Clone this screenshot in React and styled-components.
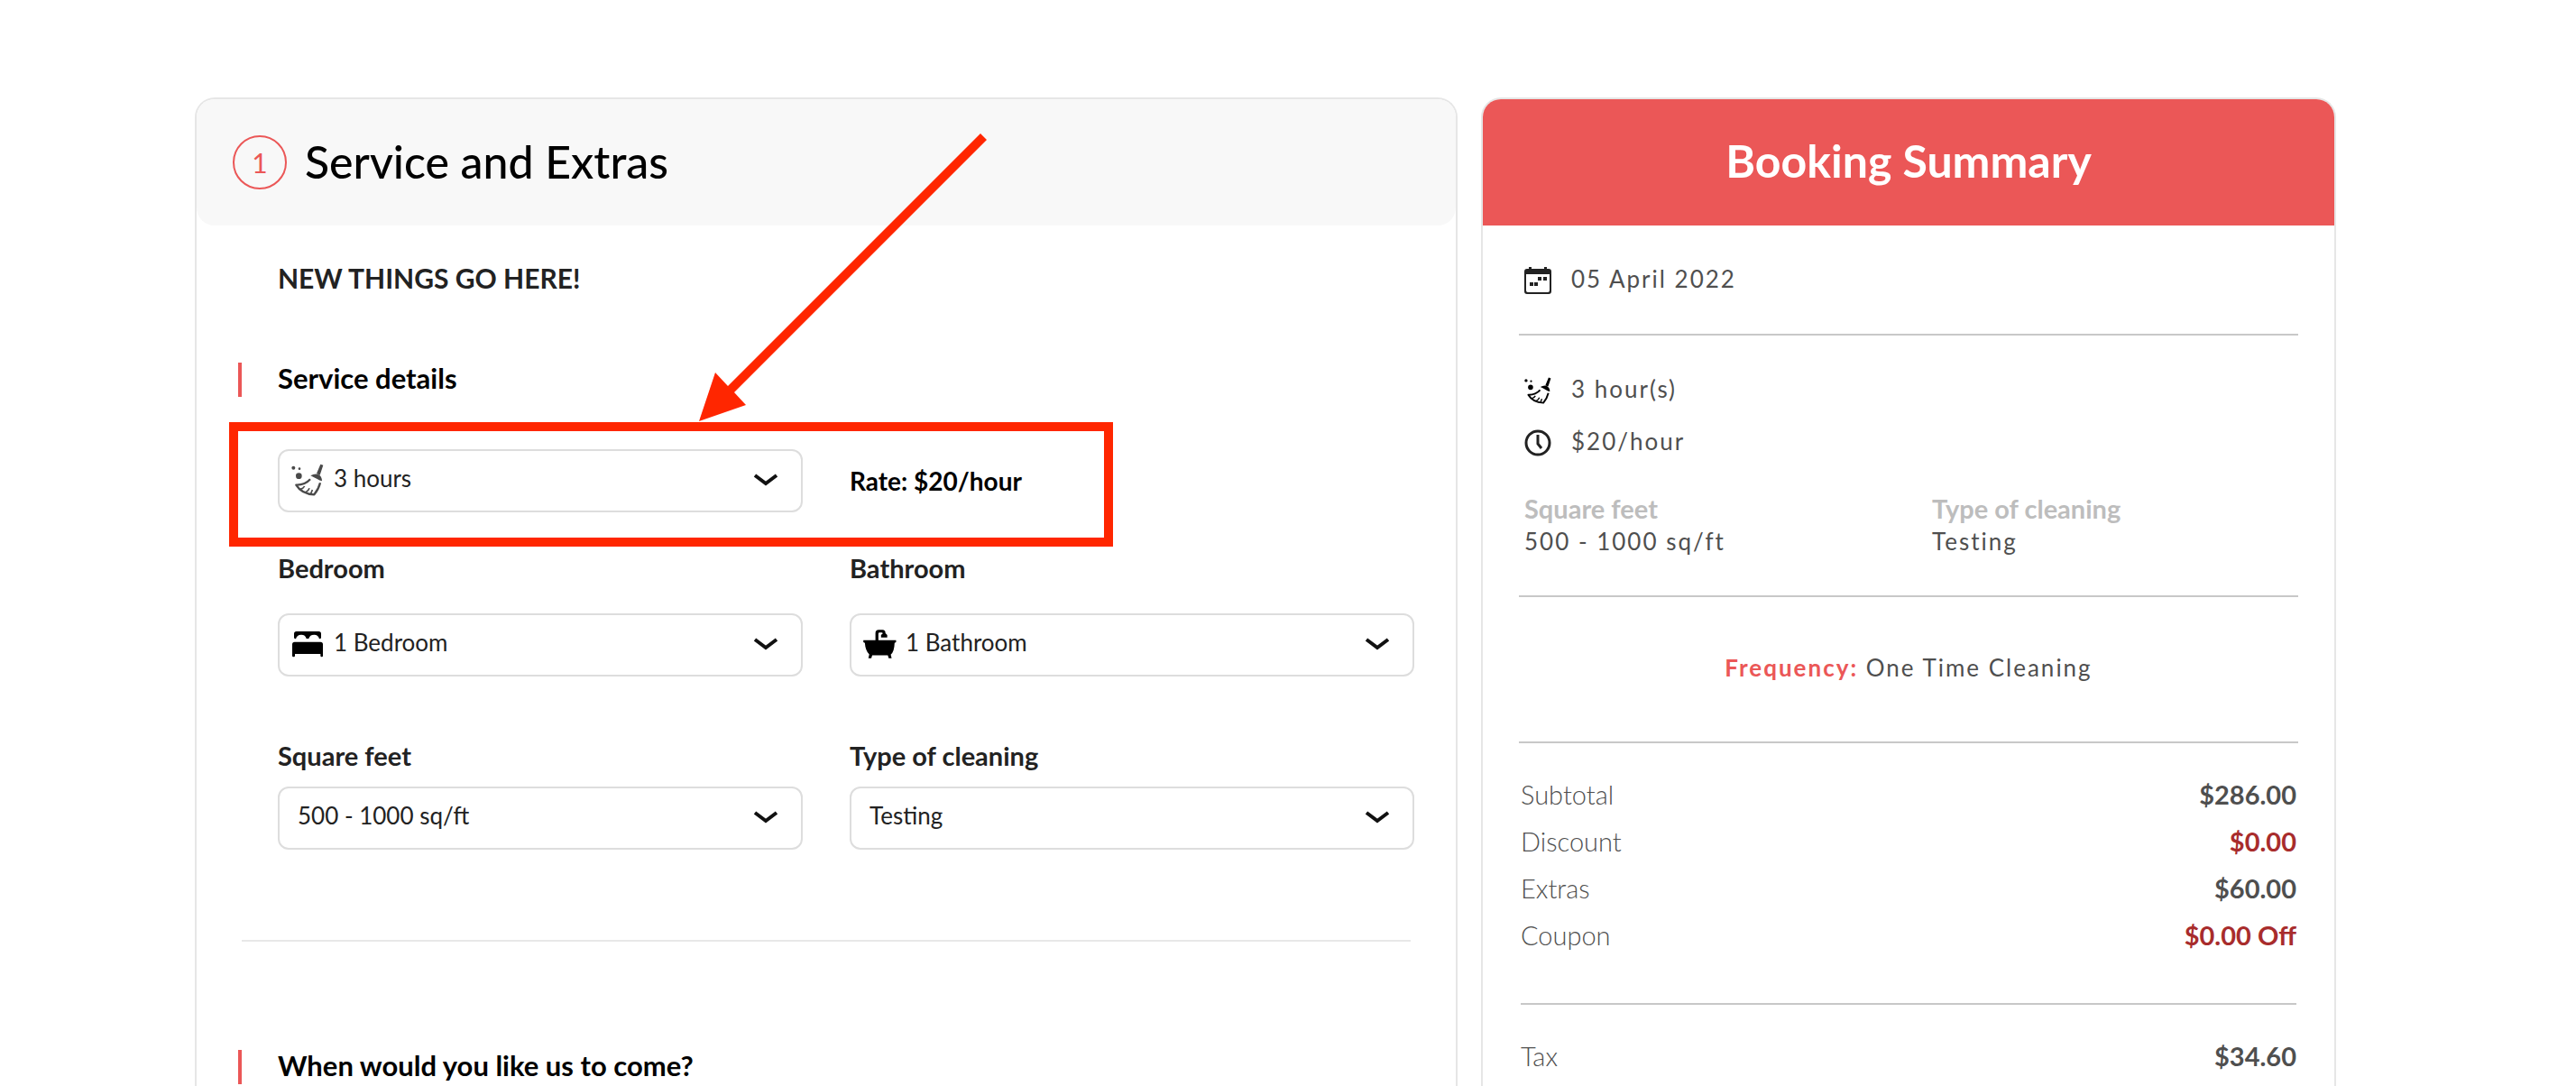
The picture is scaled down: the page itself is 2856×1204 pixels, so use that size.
import React, { useState } from "react";
import styled, { createGlobalStyle } from "styled-components";

const summaryRows = [
    { label: "Subtotal", value: "$286.00" },
    { label: "Discount", value: "$0.00", off: true },
    { label: "Extras", value: "$60.00" },
    { label: "Coupon", value: "$0.00 Off", off: true },
];

export default function App() {

    const [booking, setBooking] = useState({
        hours: "3 hours",
        bedroom: "1 Bedroom",
        bathroom: "1 Bathroom",
        area: "500 - 1000 sq/ft",
        type: "Testing",
    });

    const update = (name) => (element) => {
        setBooking({ ...booking, [name]: element.target.value });
    }

    return (
        <>
            <GlobalStyle />
            <Layout>
                <Card>
                    <StepHeader>
                        <StepNumber>1</StepNumber>
                        <StepTitle>Service and Extras</StepTitle>
                    </StepHeader>
                    <StepBody>
                        <Notice>NEW THINGS GO HERE!</Notice>
                        <SectionTitle $space="72px">Service details</SectionTitle>
                        <FieldRow $space="58px">
                            <Dropdown id="hours" ariaLabel="Hours" icon={<BroomIcon size={36} color="#4a4a4a" />} value={booking.hours} options={["2 hours", "3 hours", "4 hours"]} onChange={update("hours")} />
                            <Rate>Rate: $20/hour</Rate>
                            <Highlight />
                            <Arrow viewBox="0 0 322 322" aria-hidden="true">
                                <path d="M313 1L320 8L40 288L53 302L1 320L19 266L33 281Z" />
                            </Arrow>
                        </FieldRow>
                        <FieldRow $space="44px">
                            <Field $gap="32px">
                                <Label htmlFor="bedroom">Bedroom</Label>
                                <Dropdown id="bedroom" icon={<BedIcon />} value={booking.bedroom} options={["1 Bedroom", "2 Bedroom", "3 Bedroom"]} onChange={update("bedroom")} />
                            </Field>
                            <Field $gap="32px">
                                <Label htmlFor="bathroom">Bathroom</Label>
                                <Dropdown id="bathroom" icon={<BathIcon />} value={booking.bathroom} options={["1 Bathroom", "2 Bathroom", "3 Bathroom"]} onChange={update("bathroom")} />
                            </Field>
                        </FieldRow>
                        <FieldRow $space="70px">
                            <Field $gap="16px">
                                <Label htmlFor="area">Square feet</Label>
                                <Dropdown id="area" value={booking.area} options={["0 - 500 sq/ft", "500 - 1000 sq/ft"]} onChange={update("area")} />
                            </Field>
                            <Field $gap="16px">
                                <Label htmlFor="type">Type of cleaning</Label>
                                <Dropdown id="type" value={booking.type} options={["Testing", "Deep cleaning"]} onChange={update("type")} />
                            </Field>
                        </FieldRow>
                        <StepDivider />
                        <SectionTitle $space="120px">When would you like us to come?</SectionTitle>
                    </StepBody>
                </Card>
                <Card>
                    <SummaryHeader>Booking Summary</SummaryHeader>
                    <SummaryBody>
                        <IconList>
                            <IconRow><CalendarIcon /><span>05 April 2022</span></IconRow>
                        </IconList>
                        <Divider $space="44px" />
                        <IconList>
                            <IconRow><BroomIcon size={30} color="#000" /><span>3 hour(s)</span></IconRow>
                            <IconRow><ClockIcon /><span>$20/hour</span></IconRow>
                        </IconList>
                        <Details>
                            <div>
                                <dt>Square feet</dt>
                                <dd>{booking.area}</dd>
                            </div>
                            <div>
                                <dt>Type of cleaning</dt>
                                <dd>{booking.type}</dd>
                            </div>
                        </Details>
                        <Divider $space="42px" />
                        <Frequency><b>Frequency:</b> One Time Cleaning</Frequency>
                        <Divider $space="64px" />
                        <Totals>
                            {summaryRows.map((row) => (
                                <TotalRow key={row.label} $off={row.off}>
                                    <dt>{row.label}</dt>
                                    <dd>{row.value}</dd>
                                </TotalRow>
                            ))}
                        </Totals>
                        <Divider $space="48px" $inset="2px" />
                        <Totals>
                            <TotalRow>
                                <dt>Tax</dt>
                                <dd>$34.60</dd>
                            </TotalRow>
                        </Totals>
                    </SummaryBody>
                </Card>
            </Layout>
        </>
    )
}

function Dropdown({ id, icon, value, options, onChange, ariaLabel }) {
    return (
        <SelectBox>
            {icon && <IconSlot>{icon}</IconSlot>}
            <Select id={id} aria-label={ariaLabel} value={value} onChange={onChange} $icon={Boolean(icon)}>
                {options.map((option) => <option key={option}>{option}</option>)}
            </Select>
            <Chevron viewBox="0 0 28 16" aria-hidden="true">
                <path d="M2 3L14 12L26 3" fill="none" stroke="#111" strokeWidth="4" />
            </Chevron>
        </SelectBox>
    )
}

function BroomIcon({ size, color }) {
    return (
        <svg width={size} height={size} viewBox="62 75 108 108" fill={color} aria-hidden="true">
            <circle cx="69" cy="89" r="6" />
            <circle cx="89" cy="92" r="4" />
            <circle cx="87" cy="116" r="10" />
            <path d="M159 77L168 80L157 113L146 108Z" />
            <path d="M126 115Q138 107 151 110Q164 117 164 133Q156 132 148 126Q138 121 126 115Z" />
            <path d="M125 127Q107 147 78 146Q96 176 138 178Q153 160 158 139" fill="none" stroke={color} strokeWidth="7" strokeLinejoin="round" />
            <path d="M92 160Q102 158 106 150M110 170Q119 166 122 157M127 175L132 162" fill="none" stroke={color} strokeWidth="5" />
        </svg>
    )
}

function BedIcon() {
    return (
        <svg width="34" height="30" viewBox="45 90 102 88" aria-hidden="true">
            <path d="M51 112V100Q51 92 59 92H133Q141 92 141 100V112Q141 117 135 117Q132 103 118 103Q103 103 100 116H92Q89 103 75 103Q60 103 57 117Q51 117 51 112Z" />
            <path d="M45 174V135Q45 127 53 127H139Q147 127 147 135V174Q147 177 143 177Q139 177 139 173V167H54V173Q54 177 50 177Q45 177 45 174Z" />
        </svg>
    )
}

function BathIcon() {
    return (
        <svg width="37" height="32" viewBox="52 80 112 98" aria-hidden="true">
            <path d="M93 118V92Q93 81 104 81H117Q127 81 127 92L133 98V107H112V98L118 93Q117 90 114 90H107Q103 90 103 94V118Z" />
            <path d="M52 116H163V123L158 125Q157 155 145 165L148 177H138L135 167H82L79 177H69L72 164Q59 152 57 125L52 123Z" />
        </svg>
    )
}

function CalendarIcon() {
    return (
        <svg width="30" height="30" viewBox="0 0 30 30" fill="#222" aria-hidden="true">
            <path d="M5 0H8V2H22V0H25V2H27Q30 2 30 5V27Q30 30 27 30H3Q0 30 0 27V5Q0 2 3 2H5ZM2 8V26Q2 28 4 28H26Q28 28 28 26V8Z" fillRule="evenodd" />
            <path d="M15 11H19V15H15ZM21 11H25V15H21ZM6 17H10V21H6ZM11 17H15V21H11Z" />
        </svg>
    )
}

function ClockIcon() {
    return (
        <svg width="30" height="30" viewBox="0 0 30 30" fill="none" stroke="#222" strokeWidth="3" aria-hidden="true">
            <circle cx="15" cy="15" r="13" />
            <path d="M15 6V16L19 21" />
        </svg>
    )
}

const GlobalStyle = createGlobalStyle`
*{
    box-sizing: border-box;
}
body{
    margin: 0px;
    background-color: white;
    font-family: Lato, "Noto Sans", sans-serif;
    color: #222222;
}
h1, h2, p, dl, dd, ul{
    margin: 0px;
    padding: 0px;
}
`;

const Layout = styled.main`
display: grid;
grid-template-columns: 1400fr 948fr;
gap: 26px;
min-height: 100vh;
padding: 108px 266px 0px 216px;
`;

const Card = styled.section`
border: 2px solid #e6e6e6;
border-bottom: 0px;
border-radius: 22px 22px 0px 0px;
min-width: 0px;
`;

const StepHeader = styled.header`
display: flex;
align-items: center;
gap: 20px;
height: 140px;
padding: 0px 40px;
border-radius: 20px;
background-color: #f8f8f8;
`;

const StepNumber = styled.span`
display: flex;
align-items: center;
justify-content: center;
width: 60px;
height: 60px;
border: 2px solid #eb5757;
border-radius: 50%;
font-size: 30px;
color: #eb5757;
`;

const StepTitle = styled.h1`
padding-bottom: 2px;
font-size: 50px;
font-weight: 500;
line-height: 60px;
color: black;
`;

const StepBody = styled.div`
padding: 38px 46px 0px;
`;

const Notice = styled.p`
padding: 0px 0px 2px 44px;
font-size: 30px;
font-weight: 700;
line-height: 40px;
`;

const SectionTitle = styled.h2`
margin-top: ${({ $space }) => $space};
padding: 0px 0px 4px 40px;
border-left: 4px solid #eb5757;
font-size: 31px;
font-weight: 700;
line-height: 34px;
color: black;
`;

const FieldRow = styled.div`
position: relative;
display: grid;
grid-template-columns: 582fr 626fr;
gap: 52px;
margin-top: ${({ $space }) => $space};
padding-left: 44px;
`;

const Field = styled.div`
display: flex;
flex-direction: column;
gap: ${({ $gap }) => $gap};
`;

const Label = styled.label`
font-size: 29px;
font-weight: 700;
line-height: 36px;
`;

const Rate = styled.p`
align-self: center;
font-size: 28px;
font-weight: 700;
line-height: 36px;
color: black;
`;

/* marker drawn over the hours row */
const Highlight = styled.div`
position: absolute;
top: -30px;
left: -10px;
width: 980px;
height: 138px;
border: 10px solid #ff2600;
pointer-events: none;
`;

const Arrow = styled.svg`
position: absolute;
left: 510px;
bottom: 100%;
width: 322px;
height: 322px;
margin-bottom: 29px;
fill: #ff2600;
pointer-events: none;
`;

const SelectBox = styled.div`
position: relative;
`;

const IconSlot = styled.span`
position: absolute;
top: 0px;
left: 14px;
display: flex;
align-items: center;
justify-content: center;
width: 38px;
height: 100%;
padding-bottom: 2px;
pointer-events: none;
`;

const Select = styled.select`
display: block;
width: 100%;
height: 70px;
padding: 0px 72px 6px ${({ $icon }) => $icon ? "60px" : "20px"};
border: 2px solid #dddddd;
border-radius: 12px;
background-color: white;
font-family: inherit;
font-size: 26px;
color: #222222;
appearance: none;
cursor: pointer;
`;

const Chevron = styled.svg`
position: absolute;
top: 26px;
right: 27px;
width: 28px;
height: 16px;
pointer-events: none;
`;

const StepDivider = styled.hr`
height: 2px;
margin: 100px 4px 0px;
border: 0px;
background-color: #e8e8e8;
`;

const SummaryHeader = styled.h2`
height: 140px;
border-radius: 20px 20px 0px 0px;
background-color: #eb5757;
font-size: 50px;
font-weight: 700;
line-height: 136px;
text-align: center;
color: white;
`;

const SummaryBody = styled.div`
padding: 0px 40px;
color: #4f4f4f;
`;

const IconList = styled.ul`
display: flex;
flex-direction: column;
gap: 28px;
padding: 46px 6px 0px;
list-style: none;
`;

const IconRow = styled.li`
display: flex;
align-items: flex-start;
gap: 22px;
height: 30px;
font-size: 26px;
line-height: 26px;
letter-spacing: 2px;
`;

const Details = styled.dl`
display: grid;
grid-template-columns: 452fr 400fr;
padding: 40px 6px 0px;
line-height: 36px;
dt{
    font-size: 29px;
    font-weight: 700;
    color: #bdbdbd;
}
dd{
    font-size: 26px;
    letter-spacing: 2px;
}
`;

const Divider = styled.hr`
height: 2px;
margin: ${({ $space, $inset = "0px" }) => `${$space} ${$inset} 0px`};
border: 0px;
background-color: #c8c8c8;
`;

const Frequency = styled.p`
padding-top: 60px;
font-size: 26px;
line-height: 36px;
letter-spacing: 2px;
text-align: center;
b{
    color: #eb5757;
}
`;

const Totals = styled.dl`
padding: 32px 2px 0px;
`;

const TotalRow = styled.div`
display: flex;
justify-content: space-between;
height: 52px;
font-size: 29px;
line-height: 50px;
dt{
    font-weight: 300;
}
dd{
    font-weight: 700;
    color: ${({ $off }) => $off ? "#a82c2c" : "#4f4f4f"};
}
`;
